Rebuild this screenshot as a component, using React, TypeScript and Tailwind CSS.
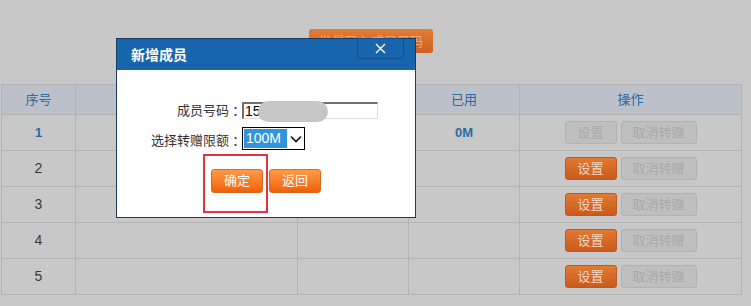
export default function App() {
  const rows = [1, 2, 3, 4, 5];
  const cell = "border border-[#b3b3b3] text-center align-middle p-0";
  return (
    <div className="relative w-[751px] h-[306px] overflow-hidden bg-[#c8c8c8] font-['Liberation_Sans','Noto_Sans_CJK_SC',sans-serif] text-[13px] text-[#333]">
      <div className="pt-[29px] pl-[309px]">
        <div className="w-[124px] h-[24px] rounded-[3px] bg-gradient-to-b from-[#e27c36] to-[#cd5f1f] text-[#eaaa80] text-[13px] flex items-start justify-center pt-[3px]">
          批量导入成员号码
        </div>
      </div>
      <table className="mt-[31px] ml-[1px] border-collapse table-fixed w-[740px]">
        <colgroup>
          <col className="w-[74px]" />
          <col className="w-[222px]" />
          <col className="w-[111px]" />
          <col className="w-[111px]" />
          <col className="w-[222px]" />
        </colgroup>
        <thead>
          <tr className="h-[30px] bg-[#bcc0c9] text-[#2c6aa3] text-[13px]">
            <th className={cell + " font-normal"}>序号</th>
            <th className={cell + " font-normal"}></th>
            <th className={cell + " font-normal"}></th>
            <th className={cell + " font-normal"}>已用</th>
            <th className={cell + " font-normal"}>操作</th>
          </tr>
        </thead>
        <tbody>
          {rows.map((n) => (
            <tr key={n} className="h-[36px]">
              <td className={cell + (n === 1 ? " text-[#2c6aa3] font-bold text-[13px]" : " text-[#3a3a3a] text-[14px]")}>{n}</td>
              <td className={cell}></td>
              <td className={cell}></td>
              <td className={cell + " text-[#2c6aa3] font-bold text-[13px]"}>{n === 1 ? "0M" : ""}</td>
              <td className={cell}>
                <div className="flex justify-center gap-[4px]">
                  {n === 1 ? (
                    <div className="w-[52px] h-[23px] rounded-[3px] bg-[#bfbfbf] border border-[#b2b2b2] text-[#a9a9a9] flex items-center justify-center">设置</div>
                  ) : (
                    <div className="w-[52px] h-[23px] rounded-[3px] bg-gradient-to-b from-[#e27a33] to-[#c95a1b] border border-[#bd5a20] text-[#f6d6c0] flex items-center justify-center">设置</div>
                  )}
                  <div className="w-[76px] h-[23px] rounded-[3px] bg-[#bfbfbf] border border-[#b2b2b2] text-[#a9a9a9] flex items-center justify-center">取消转赠</div>
                </div>
              </td>
            </tr>
          ))}
        </tbody>
      </table>

      <div className="absolute left-[116px] top-[38px] w-[300px] h-[180px] bg-white border border-[#1b3a5c]">
        <div className="relative h-[31px] bg-[#1766ad] flex items-center pl-[14px]">
          <span className="text-white text-[14px] font-bold font-['Noto_Sans_CJK_SC',sans-serif]">新增成员</span>
          <div className="absolute right-[11px] top-[-1px] w-[47px] h-[21px] rounded-b-[4px] border border-[#13508a] bg-[#1766ad] flex items-center justify-center">
            <svg width="11" height="11" viewBox="0 0 11 11">
              <path d="M1 1 L10 10 M10 1 L1 10" stroke="white" strokeWidth="1.4" />
            </svg>
          </div>
        </div>
        <div className="pt-[32px]">
          <div className="flex items-center h-[17px]">
            <div className="w-[125px] flex justify-end text-[13px] text-[#333] whitespace-nowrap">
              <span>成员号码</span>
              <span className="inline-block w-[13px] text-center font-['Noto_Sans_CJK_TC',sans-serif]">：</span>
            </div>
            <div className="relative w-[136px] h-[17px] bg-white border-t-2 border-l-2 border-[#707070] border-r border-b border-r-[#dcdcdc] border-b-[#dcdcdc] text-[14px] text-black leading-[14px] pl-[1px]">
              150
              <div className="absolute left-[14px] top-[-3px] w-[70px] h-[21px] rounded-full bg-[#c6c6c6]"></div>
            </div>
          </div>
          <div className="flex items-center h-[23px] mt-[8px]">
            <div className="w-[125px] flex justify-end text-[13px] text-[#333] whitespace-nowrap pt-[4px]">
              <span>选择转赠限额</span>
              <span className="inline-block w-[13px] text-center font-['Noto_Sans_CJK_TC',sans-serif]">：</span>
            </div>
            <div className="w-[63px] h-[23px] border border-black flex items-center">
              <div className="ml-[1px] w-[43px] h-[19px] bg-[#3293dd] text-white text-[14px] flex items-center pl-[2px]">100M</div>
              <div className="flex-1 flex items-center justify-center">
                <svg width="12" height="8" viewBox="0 0 12 8">
                  <path d="M1 1.5 L6 6.5 L11 1.5" stroke="#111" strokeWidth="1.6" fill="none" />
                </svg>
              </div>
            </div>
          </div>
          <div className="flex gap-[6px] pl-[94px] mt-[19px]">
            <div className="w-[52px] h-[24px] rounded-[3px] bg-gradient-to-b from-[#ff9a45] to-[#f06000] border border-[#de6a1e] text-white text-[13px] flex items-center justify-center">确定</div>
            <div className="w-[52px] h-[24px] rounded-[3px] bg-gradient-to-b from-[#ff9a45] to-[#f06000] border border-[#de6a1e] text-white text-[13px] flex items-center justify-center">返回</div>
          </div>
        </div>
      </div>

      <div className="absolute left-[203px] top-[154px] w-[65px] h-[59px] border-2 border-[#e4333f]"></div>
    </div>
  );
}
